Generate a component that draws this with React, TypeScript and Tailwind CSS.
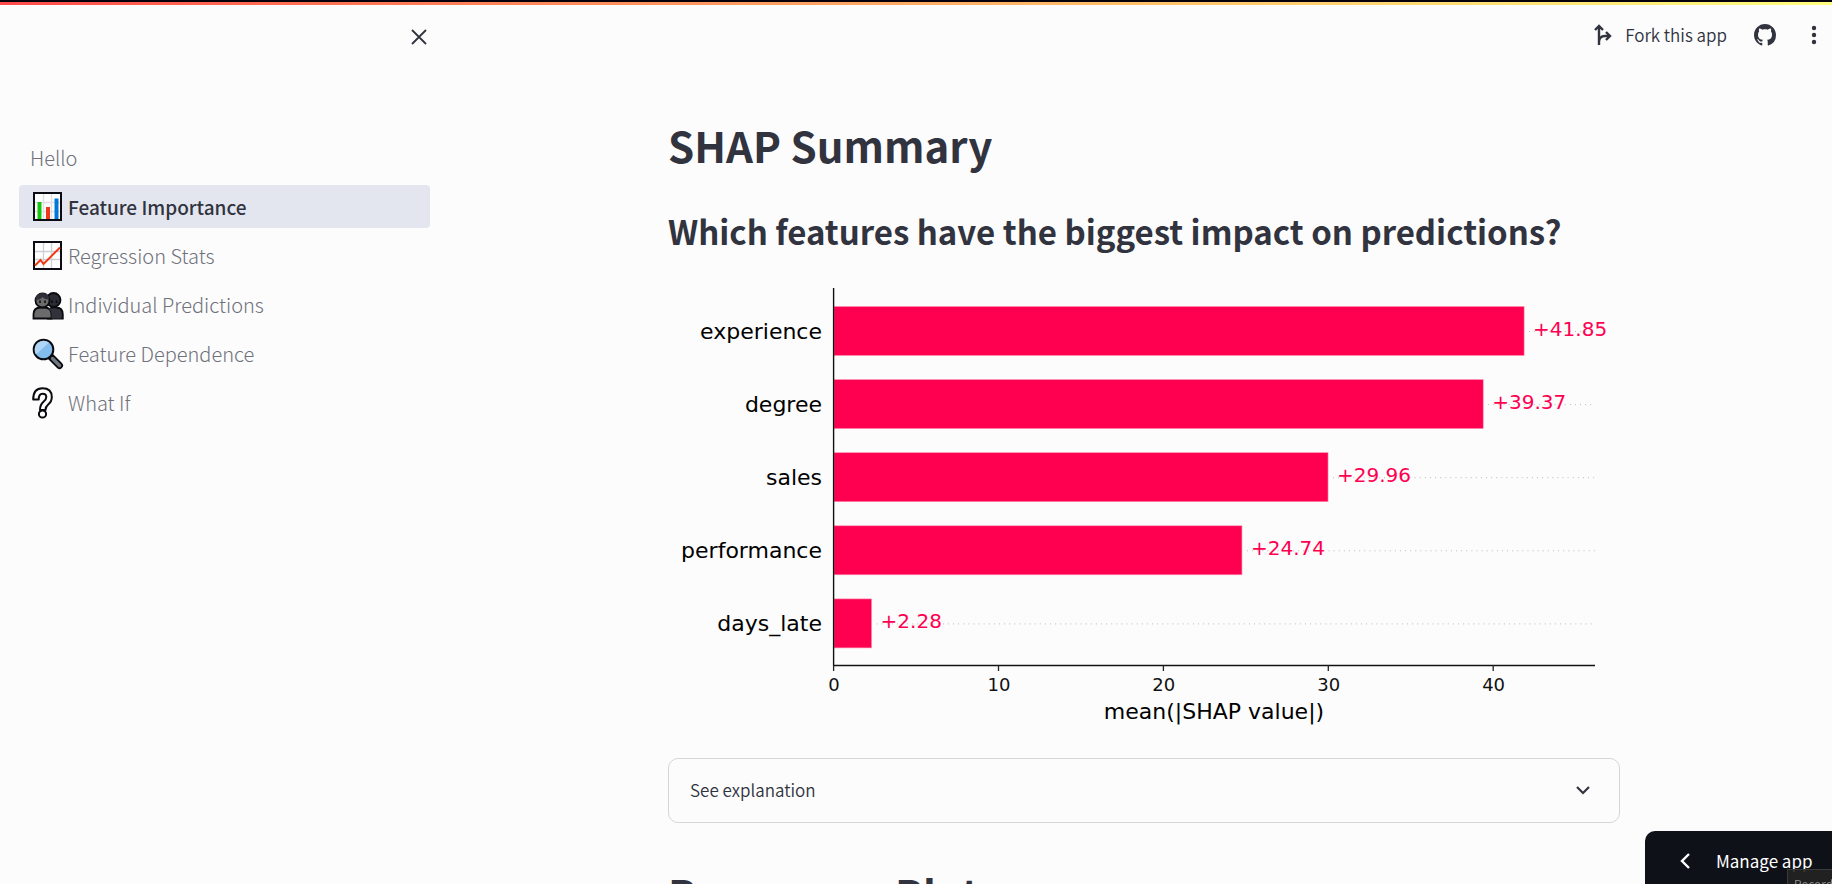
import React from "react";

const features = [
  { name: "experience", value: 41.85 },
  { name: "degree", value: 39.37 },
  { name: "sales", value: 29.96 },
  { name: "performance", value: 24.74 },
  { name: "days_late", value: 2.28 },
];

const ORIGIN = 166;
const UNIT = 16.49;
const PITCH = 73.1;

function ShapChart() {
  return (
    <svg viewBox="0 0 952 446" className="block w-full" role="img" aria-label="Mean absolute SHAP value by feature" fontFamily="'DejaVu Sans', sans-serif">
      {features.map((f, i) => {
        const top = 19 + i * PITCH;
        const end = ORIGIN + f.value * UNIT;
        return (
          <g key={f.name}>
            <line x1={end + 5} x2={927} y1={top + 24.5} y2={top + 24.5} stroke="#bbbbbb" strokeDasharray="1 4.1" />
            <rect x={ORIGIN} y={top - 0.5} width={end - ORIGIN} height={49} fill="#ff0051" stroke="#ff8fb3" strokeWidth={0.6} />
            <text x={154} y={top + 31.5} fontSize={22} textAnchor="end" fill="#000">{f.name}</text>
            <text x={end + 9} y={top + 29} fontSize={20} fill="#ff0051">{`+${f.value.toFixed(2)}`}</text>
          </g>
        );
      })}
      <path d="M165.6 0V377.5M165.6 377.5H927" stroke="#111" strokeWidth={1.4} fill="none" />
      {[0, 10, 20, 30, 40].map((t) => (
        <g key={t}>
          <line x1={165.6 + t * UNIT} x2={165.6 + t * UNIT} y1={377} y2={383} stroke="#222" strokeWidth={1.3} />
          <text x={166 + t * UNIT} y={403} fontSize={18} textAnchor="middle" fill="#111">{t}</text>
        </g>
      ))}
      <text x={546} y={430.5} fontSize={22} textAnchor="middle" fill="#000">mean(|SHAP value|)</text>
    </svg>
  );
}

function BarsIcon() {
  return (
    <svg viewBox="0 0 32 32" className="size-8" aria-hidden="true">
      <rect x="2" y="2" width="27" height="27" fill="#fff" stroke="#0c0c14" strokeWidth="2" />
      <path d="M11.5 3v25M19.5 3v25M3 11.5h25M3 20.5h25" stroke="#dfdfe6" strokeWidth="1.4" />
      <path d="M7.5 11v17" stroke="#16c60c" strokeWidth="4" />
      <path d="M16 16v12" stroke="#f03a17" strokeWidth="4" />
      <path d="M24.5 7.500v20.500" stroke="#0078d7" strokeWidth="4" />
    </svg>
  );
}

function TrendIcon() {
  return (
    <svg viewBox="0 0 32 32" className="size-8" aria-hidden="true">
      <rect x="2" y="2" width="27" height="27" fill="#fff" stroke="#0c0c14" strokeWidth="2" />
      <path d="M11.500 3v25M19.500 3v25M3 11.500h25M3 19.500h25" stroke="#cfcfd6" strokeWidth="1.300" />
      <path d="M3 25.500L8.500 20l3 4L28 7.500" fill="none" stroke="#f03a17" strokeWidth="2" />
    </svg>
  );
}

function PeopleIcon() {
  return (
    <svg viewBox="0 0 32 32" className="size-8" aria-hidden="true">
      <path d="M16 29.500v-4q0-7 6-7h2q6.800 0 6.800 7v4z" fill="#32323d" stroke="#0a0a0f" strokeWidth="1.800" />
      <circle cx="21.500" cy="11" r="7" fill="#2b2b34" stroke="#0a0a0f" strokeWidth="1.800" />
      <path d="M1.500 29.500v-4q0-7 7-7h4q7 0 7 7v4z" fill="#6b6b6b" stroke="#0a0a0f" strokeWidth="1.800" />
      <path d="M16 19.500q3.500 1.500 3.500 6v4h10v-4q0-6-6-6z" fill="#32323d" />
      <circle cx="10.500" cy="11.500" r="7" fill="#6b6b6b" stroke="#0a0a0f" strokeWidth="1.800" />
      <path d="M3.500 11q0-7 7-7 6 0 7 6-5 1-7-2-2 3-7 3z" fill="#2f2f3a" />
      <path d="M8 11.500v2.500M13 11.500v2.500M20 11.500v2.500M24.500 11.500v2.500" stroke="#0a0a0f" strokeWidth="1.500" />
    </svg>
  );
}

function MagnifierIcon() {
  return (
    <svg viewBox="0 0 32 32" className="size-8" aria-hidden="true">
      <path d="M18 18l9.500 9.500" stroke="#0a0a0f" strokeWidth="7" strokeLinecap="round" />
      <path d="M20.500 20.500l7 7" stroke="#6f777f" strokeWidth="3.500" strokeLinecap="round" />
      <circle cx="11.500" cy="11.500" r="9.800" fill="#83bdec" stroke="#0a0a0f" strokeWidth="2" />
      <path d="M4 16.500A9 9 0 0 1 17 4.500z" fill="#b0d6f5" />
    </svg>
  );
}

function QuestionIcon() {
  return (
    <svg viewBox="0 0 32 32" className="size-8" aria-hidden="true">
      <path d="M1.200 12.500q0-11.300 9.300-11.300 9.300 0 9.300 8.800 0 4.500-3.600 7.500-2.700 2.200-2.700 5.500h-5.500q0-5.500 3.500-8.300 2.800-2.200 2.800-4.700 0-3.300-3.800-3.300t-3.800 5.800z" fill="#fff" stroke="#0a0a0f" strokeWidth="2" strokeLinejoin="round" />
      <circle cx="10.500" cy="27" r="3.600" fill="#fff" stroke="#0a0a0f" strokeWidth="2" />
    </svg>
  );
}

const pages = [
  { label: "Feature Importance", Icon: BarsIcon, active: true },
  { label: "Regression Stats", Icon: TrendIcon },
  { label: "Individual Predictions", Icon: PeopleIcon },
  { label: "Feature Dependence", Icon: MagnifierIcon },
  { label: "What If", Icon: QuestionIcon },
];

function Sidebar() {
  return (
    <aside className="w-[456px] shrink-0 pr-[26px] pl-[19px]">
      <div className="flex justify-end pt-[18px]">
        <button aria-label="Close sidebar" className="flex h-7 w-[22px] items-center justify-center">
          <svg viewBox="0 0 16 16" className="size-4" fill="none" stroke="#31333f" strokeWidth="1.800" aria-hidden="true">
            <path d="M1 1l14 14M15 1L1 15" />
          </svg>
        </button>
      </div>
      <nav className="mt-[85px] flex flex-col gap-[6px] text-[20px] leading-[43px] font-light text-[#6f717b]">
        <a href="#hello" className="block h-[43px] pl-[11px]">Hello</a>
        {pages.map(({ label, Icon, active }) => (
          <a
            key={label}
            href={"#" + label}
            aria-current={active ? "page" : undefined}
            className={"flex h-[43px] items-center gap-[4px] rounded pl-[13px] " + (active ? "bg-[#e3e6ee] text-[19px] font-medium text-[#31333f]" : "")}
          >
            <Icon />
            <span>{label}</span>
          </a>
        ))}
      </nav>
    </aside>
  );
}

function Toolbar() {
  return (
    <div className="flex h-[59px] items-center justify-end pr-[8px] text-[#31333f]">
      <button className="flex items-center gap-[13px] text-[17px] font-[350]">
        <svg viewBox="0 0 18 22" className="h-[22px] w-[18px]" fill="none" stroke="currentColor" strokeWidth="2.400" aria-hidden="true">
          <path d="M5 21V3M1 6l4-4 4 4M5 18q0-6 6-6h4M12 8l4 4-4 4" />
        </svg>
        Fork this app
      </button>
      <button aria-label="View source on GitHub" className="ml-[27px]">
        <svg viewBox="0 0 16 16" className="size-[22px]" fill="currentColor" aria-hidden="true">
          <path d="M8 0C3.580 0 0 3.580 0 8c0 3.540 2.290 6.530 5.470 7.590.4.070.55-.17.55-.38 0-.19-.01-.82-.01-1.490-2.010.37-2.530-.49-2.690-.94-.09-.23-.48-.94-.82-1.130-.28-.15-.68-.52-.01-.53.63-.01 1.080.58 1.230.82.72 1.210 1.870.87 2.330.66.070-.52.28-.87.51-1.070-1.780-.2-3.640-.89-3.640-3.950 0-.87.31-1.590.82-2.150-.08-.2-.36-1.020.08-2.120 0 0 .67-.21 2.200.82.640-.18 1.320-.27 2-.27s1.360.09 2 .27c1.530-1.040 2.200-.82 2.200-.82.440 1.100.16 1.920.08 2.120.51.56.82 1.270.82 2.150 0 3.070-1.870 3.750-3.650 3.950.29.25.54.73.54 1.480 0 1.070-.01 1.930-.01 2.200 0 .21.15.46.55.38A8.010 8.010 0 0 0 16 8c0-4.420-3.580-8-8-8z" />
        </svg>
      </button>
      <button aria-label="Main menu" className="ml-[28px]">
        <svg viewBox="0 0 20 20" className="size-5" fill="currentColor" aria-hidden="true">
          <circle cx="10" cy="3" r="2.200" /><circle cx="10" cy="10" r="2.200" /><circle cx="10" cy="17" r="2.200" />
        </svg>
      </button>
    </div>
  );
}

export default function App() {
  return (
    <div className="flex h-screen flex-col overflow-hidden bg-[#fcfcfc] font-['Noto_Sans_CJK_JP',sans-serif] text-[#31333f]">
      <div className="h-[2px] shrink-0 bg-[#05000c]" />
      <div className="h-[3px] shrink-0 bg-linear-to-r from-[#ff4b4b] to-[#fffd80]" />
      <div className="flex min-h-0 flex-1">
        <Sidebar />
        <div className="min-w-0 flex-1">
          <Toolbar />
          <main className="mx-auto w-full max-w-[952px]">
            <h1 className="pt-[51px] text-[42px] leading-[60px] font-semibold">SHAP Summary</h1>
            <h2 className="mt-[32px] mb-[33px] text-[33px] leading-[48px] font-semibold whitespace-nowrap">Which features have the biggest impact on predictions?</h2>
            <ShapChart />
            <button aria-expanded="false" className="mt-[24px] flex h-[65px] w-full items-center justify-between rounded-[10px] border border-[#d6d6d9] px-[21px] pb-[2px] text-[17px] font-[350]">
              See explanation
              <svg viewBox="0 0 16 16" className="mr-[7px] size-4" fill="none" stroke="currentColor" strokeWidth="2.200" aria-hidden="true">
                <path d="M2 5l6 6 6-6" />
              </svg>
            </button>
            <h1 className="pt-[40px] text-[42px] leading-[60px] font-semibold">Beeswarm Plot</h1>
          </main>
        </div>
      </div>
      <button className="fixed right-0 bottom-0 flex h-[53px] w-[187px] items-center gap-[22px] rounded-tl-[10px] bg-[#0e1117] pt-[7px] pl-[33px] text-[17px] text-white">
        <svg viewBox="0 0 16 16" className="size-4" fill="none" stroke="currentColor" strokeWidth="2.400" aria-hidden="true">
          <path d="M11 1L4 8l7 7" />
        </svg>
        Manage app
      </button>
      <div className="fixed right-0 bottom-0 h-[15px] w-[45px] overflow-hidden border-t border-l border-[#3a3a3a] bg-[#232323]/90 pt-[7px] pl-[6px] text-[12px] leading-[14px] text-[#858585]">Record</div>
    </div>
  );
}
